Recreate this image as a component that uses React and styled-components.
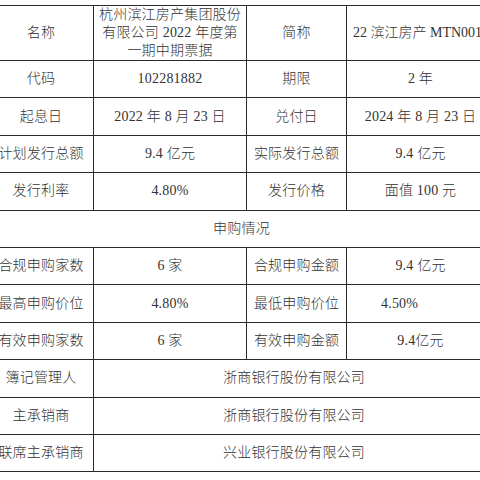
import React from 'react';
import styled, { createGlobalStyle } from 'styled-components';

const GlobalStyle = createGlobalStyle`
  html, body {
    margin: 0;
    padding: 0;
    background: #fff;
    overflow: hidden;
  }
  body {
    font-family: "Liberation Serif", "Noto Sans CJK SC", serif;
  }
`;

const Page = styled.div`
  width: 480px;
  height: 480px;
  overflow: hidden;
  padding-top: 5px;
  box-sizing: border-box;
`;

const Table = styled.table`
  margin-left: -12px;
  width: 506px;
  border-collapse: collapse;
  table-layout: fixed;
  color: #333;
  font-size: 14px;
  font-weight: 300;
  font-family: "Liberation Serif", "Noto Sans CJK SC", serif;
`;

const Row = styled.tr`
  height: ${p => (p.$tall ? '55px' : '37.4px')};
`;

const Cell = styled.td`
  border: 1px solid #2a2a2a;
  padding: ${p => (p.$indent ? `0 0 0 ${p.$indent}px` : '0 4px')};
  text-align: ${p => (p.$indent ? 'left' : 'center')};
  vertical-align: middle;
  line-height: 18px;
  letter-spacing: ${p => (p.$tight ? '0' : '0.2px')};
  white-space: nowrap;
  overflow: hidden;
`;

const rows = [
  ['代码', '102281882', '期限', '2 年'],
  ['起息日', '2022 年 8 月 23 日', '兑付日', '2024 年 8 月 23 日'],
  ['计划发行总额', '9.4 亿元', '实际发行总额', '9.4 亿元'],
  ['发行利率', '4.80%', '发行价格', '面值 100 元'],
];

const bidRows = [
  ['合规申购家数', '6 家', '合规申购金额', '9.4 亿元'],
  ['最高申购价位', '4.80%', '最低申购价位', '4.50%', 34],
  ['有效申购家数', '6 家', '有效申购金额', '9.4亿元'],
];

const banks = [
  ['簿记管理人', '浙商银行股份有限公司'],
  ['主承销商', '浙商银行股份有限公司'],
  ['联席主承销商', '兴业银行股份有限公司'],
];

function QuadRow({ cells }) {
  const [a, b, c, d, indent] = cells;
  return (
    <Row>
      <Cell>{a}</Cell>
      <Cell>{b}</Cell>
      <Cell>{c}</Cell>
      <Cell $indent={indent}>{d}</Cell>
    </Row>
  );
}

export default function App() {
  return (
    <Page>
      <GlobalStyle />
      <Table>
        <colgroup>
          <col style={{ width: 105 }} />
          <col style={{ width: 153 }} />
          <col style={{ width: 100 }} />
          <col style={{ width: 148 }} />
        </colgroup>
        <tbody>
          <Row $tall>
            <Cell>名称</Cell>
            <Cell>
              杭州滨江房产集团股份
              <br />
              有限公司 2022 年度第
              <br />
              一期中期票据
            </Cell>
            <Cell>简称</Cell>
            <Cell $indent={6} $tight>22 滨江房产 MTN001</Cell>
          </Row>
          {rows.map((r, i) => (
            <QuadRow key={i} cells={r} />
          ))}
          <Row>
            <Cell colSpan={4}>申购情况</Cell>
          </Row>
          {bidRows.map((r, i) => (
            <QuadRow key={i} cells={r} />
          ))}
          {banks.map(([k, v], i) => (
            <Row key={i}>
              <Cell>{k}</Cell>
              <Cell colSpan={3}>{v}</Cell>
            </Row>
          ))}
        </tbody>
      </Table>
    </Page>
  );
}
